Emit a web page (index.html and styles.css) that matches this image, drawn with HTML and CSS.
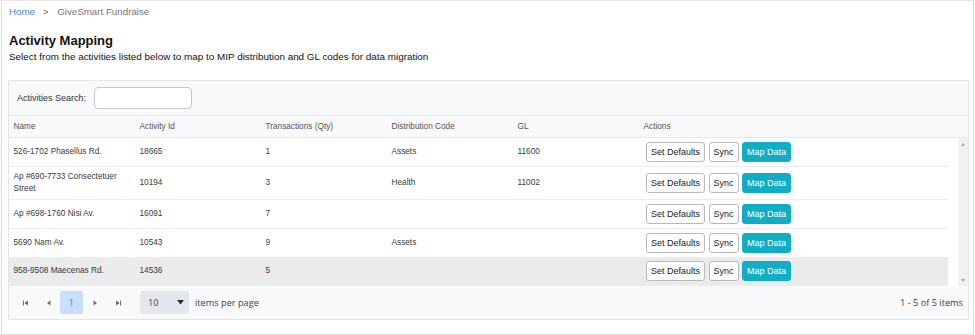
FILE: index.html
```html
<!DOCTYPE html>
<html>
<head>
    <title>Activity Mapping - GiveSmart Fundraise</title>
    <link rel="stylesheet" href="styles.css">
</head>
<body>
    <div class="page">
        <div class="breadcrumb">
            <a href="#">Home</a>
            <span class="sep">&gt;</span>
            <span class="current">GiveSmart Fundraise</span>
        </div>

        <h2>Activity Mapping</h2>
        <p class="subtitle">Select from the activities listed below to map to MIP distribution and GL codes for data migration</p>

        <div class="grid">
            <div class="grid-toolbar">
                <label for="search">Activities Search:</label>
                <input type="text" id="search" name="search">
            </div>

            <div class="grid-header">
                <table>
                    <colgroup>
                        <col class="c"><col class="c"><col class="c"><col class="c"><col class="c"><col>
                    </colgroup>
                    <tr>
                        <th>Name</th>
                        <th>Activity Id</th>
                        <th>Transactions (Qty)</th>
                        <th>Distribution Code</th>
                        <th>GL</th>
                        <th>Actions</th>
                    </tr>
                </table>
            </div>

            <div class="grid-body">
                <table class="rows">
                    <colgroup>
                        <col class="c"><col class="c"><col class="c"><col class="c"><col class="c"><col>
                    </colgroup>
                    <tr>
                        <td>526-1702 Phasellus Rd.</td>
                        <td>18665</td>
                        <td>1</td>
                        <td>Assets</td>
                        <td>11600</td>
                        <td class="actions"><div class="btn-group"><button class="btn">Set Defaults</button><button class="btn">Sync</button><button class="btn primary">Map Data</button></div></td>
                    </tr>
                    <tr>
                        <td>Ap #690-7733 Consectetuer Street</td>
                        <td>10194</td>
                        <td>3</td>
                        <td>Health</td>
                        <td>11002</td>
                        <td class="actions"><div class="btn-group"><button class="btn">Set Defaults</button><button class="btn">Sync</button><button class="btn primary">Map Data</button></div></td>
                    </tr>
                    <tr>
                        <td>Ap #698-1760 Nisi Av.</td>
                        <td>16091</td>
                        <td>7</td>
                        <td></td>
                        <td></td>
                        <td class="actions"><div class="btn-group"><button class="btn">Set Defaults</button><button class="btn">Sync</button><button class="btn primary">Map Data</button></div></td>
                    </tr>
                    <tr>
                        <td>5690 Nam Av.</td>
                        <td>10543</td>
                        <td>9</td>
                        <td>Assets</td>
                        <td></td>
                        <td class="actions"><div class="btn-group"><button class="btn">Set Defaults</button><button class="btn">Sync</button><button class="btn primary">Map Data</button></div></td>
                    </tr>
                    <tr class="hover">
                        <td>958-9508 Maecenas Rd.</td>
                        <td>14536</td>
                        <td>5</td>
                        <td></td>
                        <td></td>
                        <td class="actions"><div class="btn-group"><button class="btn">Set Defaults</button><button class="btn">Sync</button><button class="btn primary">Map Data</button></div></td>
                    </tr>
                </table>
                <div class="scrollbar">
                    <span class="arrow up"></span>
                    <span class="arrow down"></span>
                </div>
            </div>

            <div class="pager">
                <div class="pager-nav">
                    <span class="pager-icon">
                        <svg width="6" height="6" viewBox="0 0 6 6"><rect x="0" y="0.5" width="1" height="5" fill="#6c6c6c"/><path d="M5 0.5 L1.5 3 L5 5.5 Z" fill="#6c6c6c"/></svg>
                    </span>
                    <span class="pager-icon">
                        <svg width="6" height="6" viewBox="0 0 6 6"><path d="M4.5 0.5 L1 3 L4.5 5.5 Z" fill="#6c6c6c"/></svg>
                    </span>
                    <span class="pager-page">1</span>
                    <span class="pager-icon">
                        <svg width="6" height="6" viewBox="0 0 6 6"><path d="M1.5 0.5 L5 3 L1.5 5.5 Z" fill="#6c6c6c"/></svg>
                    </span>
                    <span class="pager-icon">
                        <svg width="6" height="6" viewBox="0 0 6 6"><path d="M1 0.5 L4.5 3 L1 5.5 Z" fill="#6c6c6c"/><rect x="5" y="0.5" width="1" height="5" fill="#6c6c6c"/></svg>
                    </span>
                </div>
                <div class="pager-size">
                    <span>10</span>
                    <svg width="7" height="5" viewBox="0 0 7 5"><path d="M0 0 L7 0 L3.5 4.5 Z" fill="#2b2b2b"/></svg>
                </div>
                <span class="pager-label">items per page</span>
                <span class="pager-info">1 - 5 of 5 items</span>
            </div>
        </div>
    </div>
</body>
</html>
```

FILE: styles.css
```css
body {
    margin: 0;
    padding: 0;
    font-family: "Liberation Sans", Arial, sans-serif;
    color: #222;
    background-color: white;
}

.page {
    margin-left: 1px;
    width: 962px;
    height: 333px;
    padding: 0 3px 0 6px;
    border: 1px solid #dcdcdc;
    border-top-color: #e8e8e8;
}

.breadcrumb {
    font-size: 9.75px;
    line-height: 15px;
    padding-top: 3px;
    padding-left: 1px;
}

.breadcrumb a {
    color: #3f86e0;
    text-decoration: none;
}

.breadcrumb .sep {
    color: #666;
    margin: 0 6px 0 5px;
}

.breadcrumb .current {
    color: #777;
}

h2 {
    font-size: 13px;
    line-height: 16px;
    margin: 14px 0 0 1px;
    color: #111;
}

.subtitle {
    font-size: 9.9px;
    line-height: 14px;
    margin: 1px 0 0 1px;
    color: #111;
}

.grid {
    margin-top: 16px;
    width: 959px;
    border: 1px solid #e3e4e6;
    background-color: white;
}

.grid-toolbar {
    display: flex;
    align-items: center;
    height: 34px;
    padding-left: 8px;
    background-color: #f8f9fa;
    border-bottom: 1px solid #e6e7e9;
    font-size: 9px;
    color: #333;
}

.grid-toolbar label {
    margin-right: 8px;
}

.grid-toolbar input {
    width: 98px;
    height: 22px;
    box-sizing: border-box;
    border: 1px solid #c8c8c8;
    border-radius: 4px;
    background-color: white;
}

table {
    width: 939px;
    table-layout: fixed;
    border-collapse: collapse;
    font-size: 8.25px;
    line-height: 12.4px;
}

col.c {
    width: 126px;
}

.grid-header {
    background-color: #f8f9fa;
    border-bottom: 1px solid #e6e7e9;
}

th {
    text-align: left;
    font-weight: normal;
    color: #555;
    padding: 4.5px 4.5px;
}

.grid-body {
    display: flex;
    align-items: stretch;
}

td {
    color: #3a3a3a;
    padding: 3.8px 4.5px;
    border-bottom: 1px solid #ececec;
    vertical-align: middle;
}

tr.hover td {
    background-color: #ebebeb;
    border-bottom-color: #ebebeb;
}

td.actions {
    padding-left: 7px;
}

.btn-group {
    display: flex;
    gap: 3.5px;
}

.btn {
    height: 20px;
    padding: 0 4px;
    border: 1px solid #b9b9b9;
    border-radius: 3px;
    background-color: white;
    font-family: "Liberation Sans", Arial, sans-serif;
    font-size: 9px;
    color: #222;
    cursor: pointer;
}

.btn.primary {
    background-color: #13adc3;
    border-color: #13adc3;
    color: white;
}

.scrollbar {
    margin-left: 10px;
    width: 10px;
    background-color: #f1f1f1;
    display: flex;
    flex-direction: column;
    justify-content: space-between;
    align-items: center;
    padding: 5px 0 4px;
}

.arrow {
    width: 0;
    height: 0;
    border-left: 2.5px solid transparent;
    border-right: 2.5px solid transparent;
}

.arrow.up {
    border-bottom: 3px solid #a6a6a6;
}

.arrow.down {
    border-top: 3px solid #a6a6a6;
}

.pager {
    display: flex;
    align-items: center;
    height: 33px;
    padding: 0 5px 0 5px;
    background-color: #f8f9fa;
    font-family: "Open Sans", sans-serif;
    font-size: 9.2px;
    color: #424242;
}

.pager-nav {
    display: flex;
    align-items: center;
}

.pager-icon {
    width: 23px;
    height: 23px;
    display: flex;
    align-items: center;
    justify-content: center;
}

.pager-page {
    width: 23px;
    height: 23px;
    display: flex;
    align-items: center;
    justify-content: center;
    background-color: #c9defa;
    color: #3d7fe0;
    border-radius: 2px;
}

.pager-size {
    display: flex;
    align-items: center;
    justify-content: space-between;
    width: 49px;
    height: 23px;
    box-sizing: border-box;
    padding: 0 5px 0 8px;
    margin-left: 11px;
    background-color: #e4e7eb;
    border-radius: 3px;
}

.pager-label {
    margin-left: 6px;
}

.pager-info {
    margin-left: auto;
}
```
